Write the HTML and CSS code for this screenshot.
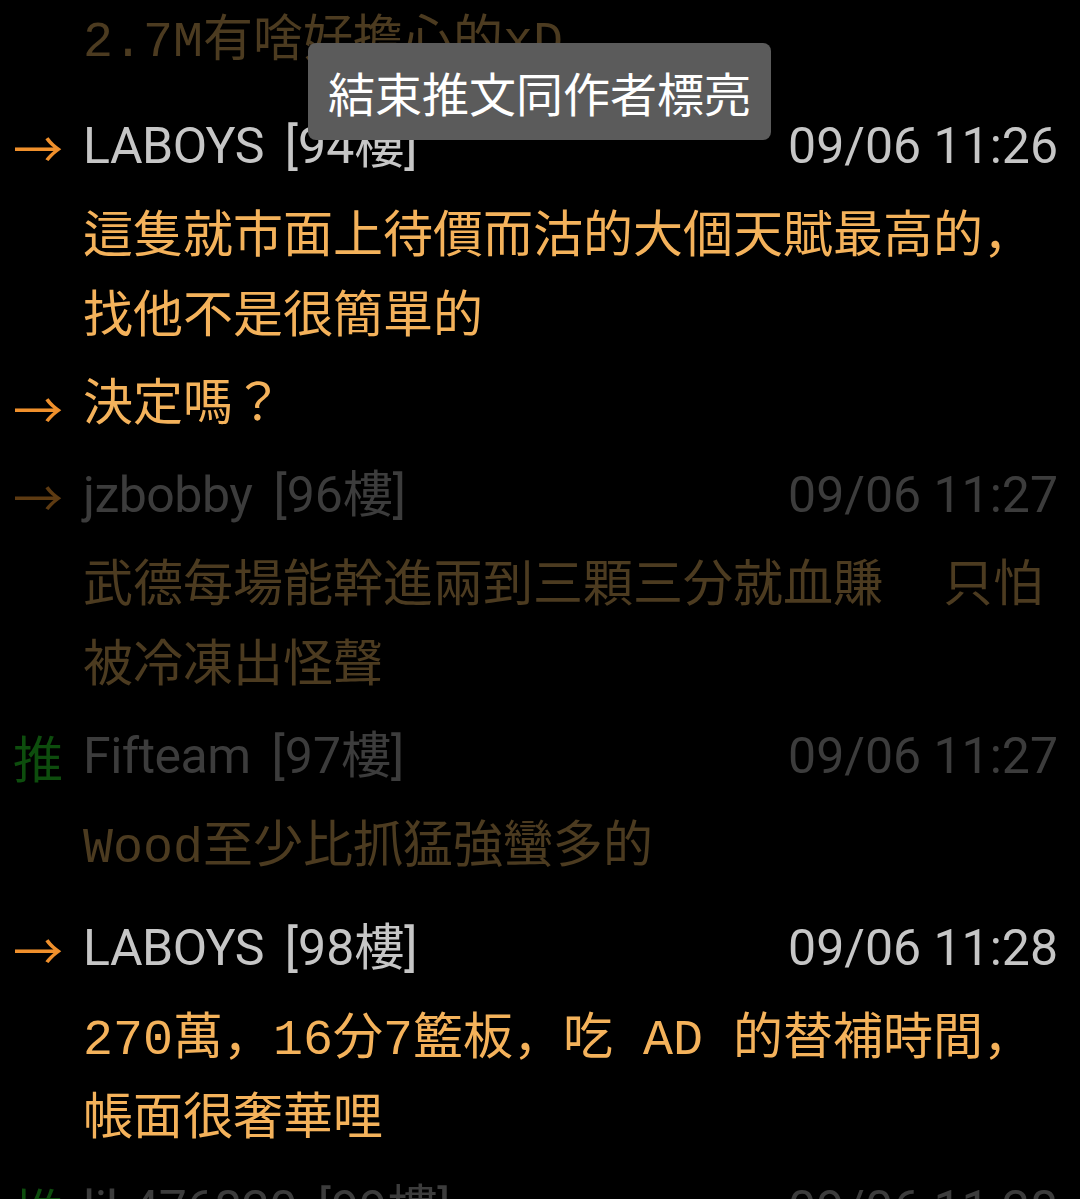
FILE: index.html
```html
<!DOCTYPE html>
<html lang="zh-Hant">
<head>
    <meta charset="UTF-8">
    <title>推文</title>
    <link rel="stylesheet" href="styles.css">
</head>
<body>
<div class="list">
    <div class="item cut">
        <div class="tag"></div>
        <div class="body">
            <div class="text">2.7M有啥好擔心的xD</div>
        </div>
    </div>

    <div class="item own">
        <div class="tag arrow">→</div>
        <div class="body">
            <div class="head">
                <span class="name">LABOYS</span>
                <span class="floor">[94樓]</span>
                <span class="time">09/06 11:26</span>
            </div>
            <div class="text">這隻就市面上待價而沽的大個天賦最高的，找他不是很簡單的</div>
        </div>
    </div>

    <div class="item own cont">
        <div class="tag arrow">→</div>
        <div class="body">
            <div class="text">決定嗎？</div>
        </div>
    </div>

    <div class="item">
        <div class="tag arrow">→</div>
        <div class="body">
            <div class="head">
                <span class="name">jzbobby</span>
                <span class="floor">[96樓]</span>
                <span class="time">09/06 11:27</span>
            </div>
            <div class="text">武德每場能幹進兩到三顆三分就血賺  只怕被冷凍出怪聲</div>
        </div>
    </div>

    <div class="item">
        <div class="tag push">推</div>
        <div class="body">
            <div class="head">
                <span class="name">Fifteam</span>
                <span class="floor">[97樓]</span>
                <span class="time">09/06 11:27</span>
            </div>
            <div class="text">Wood至少比抓猛強蠻多的</div>
        </div>
    </div>

    <div class="item own">
        <div class="tag arrow">→</div>
        <div class="body">
            <div class="head">
                <span class="name">LABOYS</span>
                <span class="floor">[98樓]</span>
                <span class="time">09/06 11:28</span>
            </div>
            <div class="text">270萬，16分7籃板，吃 AD 的替補時間，帳面很奢華哩</div>
        </div>
    </div>

    <div class="item">
        <div class="tag push">推</div>
        <div class="body">
            <div class="head">
                <span class="name">lik476820</span>
                <span class="floor">[99樓]</span>
                <span class="time">09/06 11:28</span>
            </div>
        </div>
    </div>
</div>

<div class="toast">結束推文同作者標亮</div>
</body>
</html>
```

FILE: styles.css
```css
body {
    margin: 0;
    height: 1199px;
    overflow: hidden;
    background-color: #000;
    font-feature-settings: "locl" 0;
}

.list {
    display: flex;
    flex-direction: column;
}

.item {
    display: grid;
    grid-template-columns: 70px 1fr;
    padding: 18px 22px 0 13px;
}

.item.own {
    padding-top: 29px;
}

.item.cont {
    padding-top: 8px;
}

.item.cut {
    padding-top: 3px;
    padding-bottom: 4px;
}

/* 左邊的 → / 推 */
.tag {
    height: 60px;
    font-family: "Noto Sans CJK JP", sans-serif;
    font-size: 50px;
    line-height: 60px;
}

.cont .tag {
    height: 80px;
    line-height: 80px;
}

.arrow {
    color: #5e3b12;
}

.push {
    color: #0d4d0d;
}

.own .arrow {
    color: #f0902c;
}

.head {
    display: flex;
    height: 60px;
    margin-bottom: 23px;
    line-height: 60px;
    font-family: Roboto, "Noto Sans CJK JP", sans-serif;
    font-size: 50px;
    color: #3c3c3c;
    white-space: nowrap;
}

.name {
    letter-spacing: -0.5px;
}

.floor {
    margin-left: 21px;
}

.time {
    margin-left: auto;
}

.own .head {
    color: #c6c6c6;
}

.text {
    font-family: "Liberation Mono", "Noto Sans CJK JP", monospace;
    font-size: 50px;
    line-height: 80px;
    color: #4c3b20;
    white-space: pre-wrap;
    word-break: break-all;
}

.own .text {
    color: #f4b25b;
}

.toast {
    position: absolute;
    top: 43px;
    left: 308px;
    padding: 0 20px;
    border-radius: 8px;
    background-color: #5b5b5b;
    font-family: "Noto Sans CJK JP", sans-serif;
    font-size: 47px;
    line-height: 97px;
    color: #fff;
    white-space: nowrap;
}
```
